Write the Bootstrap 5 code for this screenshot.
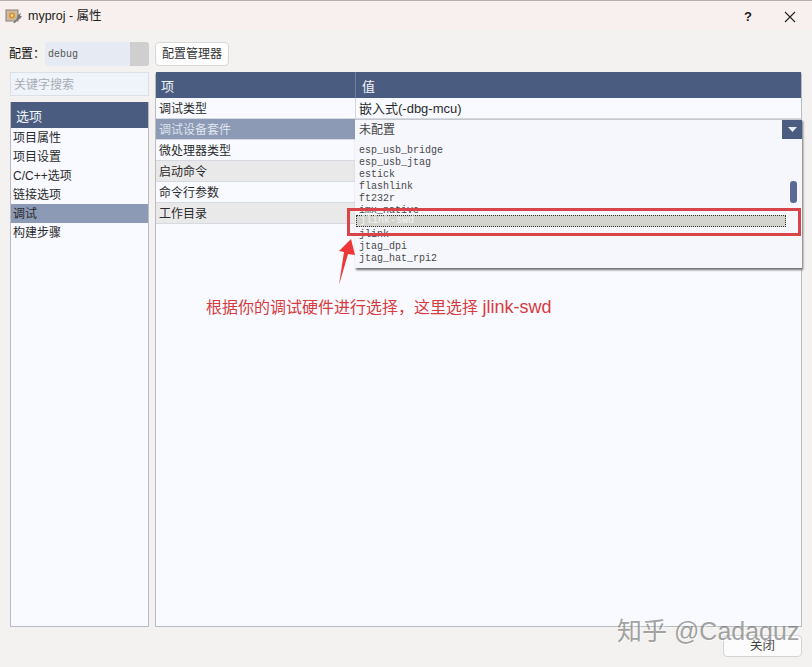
<!DOCTYPE html>
<html lang="zh"><head><meta charset="utf-8">
<link href="https://cdn.jsdelivr.net/npm/bootstrap@5.3.0/dist/css/bootstrap.min.css" rel="stylesheet">
<style>
html,body{height:667px;overflow:hidden}
body{font-family:"Liberation Sans","Noto Sans CJK SC",sans-serif;font-size:12px;color:#222;background:#f3f2f0;position:relative}
.tbar{height:30px;background:#f8f0ee;border-top:1px solid #b5b0ad;padding:2px 0 0 5px}
.tbar .ttl{font-size:12.5px;margin-left:5px;color:#222}
.tbtns{margin-left:auto;width:52px;margin-right:16px}
.qm{font-size:13px;font-weight:600;color:#222}
.mainp{padding:11px 10px 0 10px;height:605px}
.leftc{width:139px}
.rightc{width:647px;margin-left:6px}
.cfg{height:25px;margin-bottom:6px;padding-top:1px}
.cfglbl{width:36px;flex:none;color:#111;white-space:nowrap;margin-left:-1px}
.cfgsel{width:104px;flex:none;height:24px;background:#e6ebf3;border-radius:3px;font:10px "Liberation Mono",monospace;color:#555;padding-left:3px;overflow:hidden}
.cfgarr{width:19px;height:24px;background:#cfcfcf;margin-left:auto}
.mgrbtn{height:24px;width:74px;background:#fdfdfd;border:1px solid #d6d6d6;border-radius:4px;font-size:12px;color:#333;padding:0}
.srch{height:24px;background:#eff3fa;border:1px solid #dcdfe6;color:#a8adb6;padding:0 3px;margin-bottom:6px;line-height:24px}
.lst{height:525px;background:#f8faff;border:1px solid #b9bcc2;border-top:0}
.hd{background:#4a5d80;color:#f4f6fa}
.lhd{height:26px;line-height:29px;padding-left:5px;font-size:13px}
.lit{height:19px;line-height:21px;padding-left:2px;color:#2b2b2b}
.lit.act{background:#8c9ab6}
.tblw{height:555px;background:#f8faff;border:1px solid #b9bcc2;border-top:0;border-radius:3px 3px 0 0;position:relative}
.thd{height:26px;line-height:29px;font-size:13px}
.thd span{padding-left:5px}
.ca{width:200px;flex:none;padding-left:3px;border-right:1px solid #d2d5db}
.thd .ca{padding-left:0;border-right:1px solid #6d7d9b}
.vh span{padding-left:6px}
.rw{height:21px;line-height:22px;border-bottom:1px solid #d6d9df;color:#2a2a2a}
.rw.sel{background:#8c9ab6;color:#dfe4ee}
.rw.alt{background:#e9e9e9}
.cv{padding-left:3px;font-size:13px}
.footr{height:32px;padding:0 10px 0 0}
.clsbtn{width:79px;height:22px;background:#fcfcfc;border:1px solid #d4d4d4;border-radius:4px;font-size:12.5px;color:#444;padding:0}
.combo{position:absolute;left:355px;top:119px;width:447px;height:149px;background:#f5f7fd;box-shadow:1px 2px 2px #6e6e6e;z-index:3}
.cbtop{height:19px;line-height:20px;padding-left:4px;color:#444;border-top:1px solid #c4c7cd}
.cbarr{width:20px;height:19px;background:#4a5d80;margin-left:auto}
.opts{font:10px/15px "Liberation Mono",monospace;color:#4a4a4a;padding:5px 0 0 4px}
.opts div{height:12px}
.opts .optsel{background:#d4d4ce;border:1px dotted #333;color:#f3f3f3;width:430px;margin-left:-3px;padding-left:3px;line-height:10px}
.thumb{position:absolute;left:435px;top:62px;width:7px;height:22px;background:#5a6a94;border-radius:3px}
.redbox{position:absolute;left:347px;top:208px;width:454px;height:28px;border:3px solid #d9444a;z-index:4}
.arrow{position:absolute;left:335px;top:232px;z-index:4}
.note{position:absolute;left:206px;top:297px;font-size:16px;color:#d63b3f;z-index:4;line-height:20px}
.note span{font-size:18px}
.wm{position:absolute;left:617px;top:616px;font-size:25px;color:rgba(105,105,105,.62);z-index:5;line-height:30px;text-shadow:1px 1px 1px rgba(255,255,255,.6);white-space:nowrap}
</style></head><body>
<div class="tbar d-flex align-items-center">
<svg width="18" height="17" viewBox="0 0 18 17"><rect x="1" y="2" width="12" height="11" fill="#cdb9a0" stroke="#8a8078"/><circle cx="7" cy="7.500" r="3" fill="#d9961f"/><circle cx="7" cy="7.500" r="1.200" fill="#f6e2b0"/><path d="M8 15l4-5 1-3 3-2-1 3 2 0-2 3-3 1-2 3z" fill="#777"/></svg>
<span class="ttl">myproj - 属性</span>
<div class="tbtns d-flex justify-content-between align-items-center">
<span class="qm">?</span>
<svg width="12" height="12" viewBox="0 0 12 12"><path d="M1 1l10 10M11 1L1 11" stroke="#222" stroke-width="1.100"/></svg>
</div></div>
<div class="mainp d-flex">
<div class="leftc d-flex flex-column">
<div class="cfg d-flex align-items-center"><span class="cfglbl">配置：</span><div class="cfgsel d-flex align-items-center">debug<div class="cfgarr"></div></div></div>
<div class="srch">关键字搜索</div>
<div class="lst"><div class="hd lhd">选项</div>
<div class="lit">项目属性</div><div class="lit">项目设置</div><div class="lit">C/C++选项</div><div class="lit">链接选项</div><div class="lit act">调试</div><div class="lit">构建步骤</div></div>
</div>
<div class="rightc d-flex flex-column">
<div class="cfg"><button class="mgrbtn" type="button">配置管理器</button></div>
<div class="tblw">
<div class="hd thd d-flex"><div class="ca"><span>项</span></div><div class="vh flex-grow-1"><span>值</span></div></div>
<div class="rw d-flex"><div class="ca">调试类型</div><div class="cv">嵌入式(-dbg-mcu)</div></div>
<div class="rw sel d-flex"><div class="ca">调试设备套件</div><div class="cv"></div></div>
<div class="rw d-flex"><div class="ca">微处理器类型</div><div class="cv"></div></div>
<div class="rw alt d-flex"><div class="ca">启动命令</div><div class="cv"></div></div>
<div class="rw d-flex"><div class="ca">命令行参数</div><div class="cv"></div></div>
<div class="rw alt d-flex"><div class="ca">工作目录</div><div class="cv"></div></div>
</div></div></div>
<div class="footr d-flex justify-content-end"><button class="clsbtn" type="button">关闭</button></div>
<div class="combo">
<div class="cbtop d-flex">未配置<div class="cbarr d-flex align-items-center justify-content-center"><svg width="9" height="5" viewBox="0 0 9 5"><path d="M0 0h9L4.500 5z" fill="#e8ecf3"/></svg></div></div>
<div class="opts"><div>esp_usb_bridge</div><div>esp_usb_jtag</div><div>estick</div><div>flashlink</div><div>ft232r</div><div>imx_native</div><div class="optsel">jlink-swd</div><div>jlink</div><div>jtag_dpi</div><div>jtag_hat_rpi2</div></div>
<div class="thumb"></div>
</div>
<div class="redbox"></div>
<svg class="arrow" width="24" height="56" viewBox="0 0 24 56"><path d="M16 7L20 23 13 22 4 53 9 20 4 19z" fill="#ee3636"/></svg>
<div class="note">根据你的调试硬件进行选择，这里选择 <span>jlink-swd</span></div>
<div class="wm">知乎 @Cadaquz</div>
</body></html>
